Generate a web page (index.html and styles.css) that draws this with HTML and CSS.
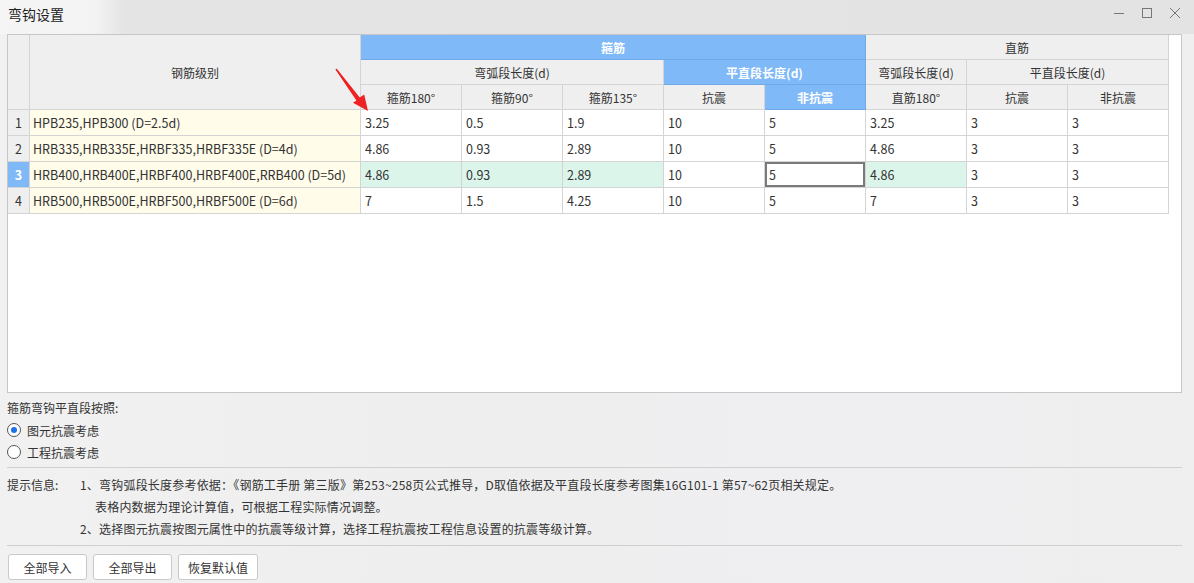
FILE: index.html
```html
<!DOCTYPE html>
<html lang="zh">
<head>
<meta charset="utf-8">
<title>弯钩设置</title>
<link rel="stylesheet" href="styles.css">
</head>
<body>
<div class="window">
  <div class="titlebar">
    <span class="title">弯钩设置</span>
    <div class="controls">
      <svg width="12" height="12" viewBox="0 0 12 12"><path d="M1 6.5H11" stroke="#777" stroke-width="1" fill="none"/></svg>
      <svg width="12" height="12" viewBox="0 0 12 12"><rect x="1.5" y="1.5" width="9" height="9" stroke="#777" stroke-width="1" fill="none"/></svg>
      <svg width="12" height="12" viewBox="0 0 12 12"><path d="M1 1L11 11M11 1L1 11" stroke="#777" stroke-width="1" fill="none"/></svg>
    </div>
  </div>
  <div class="content">
    <div class="grid-frame">
      <table class="grid">
        <colgroup>
          <col class="c-num"><col class="c-name">
          <col class="c-val"><col class="c-val"><col class="c-val"><col class="c-val">
          <col class="c-val"><col class="c-val"><col class="c-val"><col class="c-val">
        </colgroup>
        <thead>
          <tr class="hrow">
            <th rowspan="3" class="rownum"></th>
            <th rowspan="3">钢筋级别</th>
            <th colspan="5" class="blue">箍筋</th>
            <th colspan="3">直筋</th>
          </tr>
          <tr class="hrow">
            <th colspan="3">弯弧段长度(d)</th>
            <th colspan="2" class="blue">平直段长度(d)</th>
            <th>弯弧段长度(d)</th>
            <th colspan="2">平直段长度(d)</th>
          </tr>
          <tr class="hrow">
            <th>箍筋180°</th>
            <th>箍筋90°</th>
            <th>箍筋135°</th>
            <th>抗震</th>
            <th class="blue">非抗震</th>
            <th>直筋180°</th>
            <th>抗震</th>
            <th>非抗震</th>
          </tr>
        </thead>
        <tbody>
          <tr class="drow">
            <td class="rownum">1</td><td class="name">HPB235,HPB300 (D=2.5d)</td>
            <td>3.25</td><td>0.5</td><td>1.9</td><td>10</td><td>5</td><td>3.25</td><td>3</td><td>3</td>
          </tr>
          <tr class="drow">
            <td class="rownum">2</td><td class="name">HRB335,HRB335E,HRBF335,HRBF335E (D=4d)</td>
            <td>4.86</td><td>0.93</td><td>2.89</td><td>10</td><td>5</td><td>4.86</td><td>3</td><td>3</td>
          </tr>
          <tr class="drow sel">
            <td class="rownum cur">3</td><td class="name">HRB400,HRB400E,HRBF400,HRBF400E,RRB400 (D=5d)</td>
            <td class="hl">4.86</td><td class="hl">0.93</td><td class="hl">2.89</td><td>10</td><td class="focus">5<span class="handle"></span></td><td class="hl">4.86</td><td>3</td><td>3</td>
          </tr>
          <tr class="drow">
            <td class="rownum">4</td><td class="name">HRB500,HRB500E,HRBF500,HRBF500E (D=6d)</td>
            <td>7</td><td>1.5</td><td>4.25</td><td>10</td><td>5</td><td>7</td><td>3</td><td>3</td>
          </tr>
        </tbody>
      </table>
      <svg class="arrow" width="40" height="50" viewBox="0 0 40 50">
        <polygon points="4.4,6.4 5.6,5.6 28.8,34.6 33.2,31.4 37,48 22,39.8 25.4,37.4" fill="#ee2222"/>
      </svg>
    </div>

    <div class="options">
      <div class="opt-label">箍筋弯钩平直段按照:</div>
      <label class="radio"><span class="dot on"></span>图元抗震考虑</label>
      <label class="radio"><span class="dot"></span>工程抗震考虑</label>
    </div>

    <div class="info">
      <div class="info-label">提示信息:</div>
      <div class="info-text">
        <div>1、弯钩弧段长度参考依据：《钢筋工手册 第三版》第253~258页公式推导，D取值依据及平直段长度参考图集16G101-1 第57~62页相关规定。</div>
        <div class="indent">表格内数据为理论计算值，可根据工程实际情况调整。</div>
        <div>2、选择图元抗震按图元属性中的抗震等级计算，选择工程抗震按工程信息设置的抗震等级计算。</div>
      </div>
    </div>

    <div class="buttons">
      <button class="btn">全部导入</button>
      <button class="btn">全部导出</button>
      <button class="btn">恢复默认值</button>
    </div>
  </div>
</div>
</body>
</html>
```

FILE: styles.css
```css
* { box-sizing: border-box; }
html, body { margin: 0; padding: 0; }
body {
  width: 1194px;
  height: 583px;
  overflow: hidden;
  font-family: "Noto Sans CJK SC", "Noto Sans", sans-serif;
  font-size: 12px;
  color: #333;
  background: linear-gradient(90deg, #f1f1f1 0, #eeeeee 40%, #efeef1 70%, #efefef 100%);
}
.window { width: 1194px; height: 583px; }
.titlebar {
  height: 34px;
  display: flex;
  align-items: flex-start;
  justify-content: space-between;
  background: linear-gradient(90deg, #f5f5f5 0, #f3f3f3 95px, #e4e4e4 125px, #e3e3e3 100%);
}
.title {
  font-size: 14px;
  color: #222;
  padding-left: 8px;
  line-height: 28px;
}
.controls {
  display: flex;
  gap: 16px;
  padding: 7px 13px 0 0;
}
.content { padding: 0 12px 0 7px; }

.grid-frame {
  position: relative;
  height: 359px;
  border: 1px solid #c6c6c6;
  background: #fff;
}
.grid {
  table-layout: fixed;
  border-collapse: separate;
  border-spacing: 0;
  width: 1161px;
}
.c-num { width: 22px; }
.c-name { width: 331px; }
.c-val { width: 101px; }
.grid th, .grid td {
  border-right: 1px solid #d4d4d4;
  border-bottom: 1px solid #d4d4d4;
  padding: 0 4px;
  white-space: nowrap;
  overflow: hidden;
}
.grid th {
  background: #efefef;
  font-weight: normal;
  color: #333;
  text-align: center;
  font-size: 12px;
}
.grid th.blue {
  background: #7fb9f7;
  color: #fff;
  font-weight: bold;
  border-right-color: #6fa9e8;
  border-bottom-color: #6fa9e8;
}
.hrow { height: 25px; }
.drow { height: 26px; }
.grid td { text-align: left; background: #fff; font-size: 12.5px; }
.grid td.rownum { background: #efefef; text-align: center; padding: 0; }
.grid td.rownum.cur { background: #7fb9f7; color: #fff; font-weight: bold; }
.grid td.name { background: #fffcea; padding-left: 3px; }
.grid td.hl { background: #dcf5eb; }
.grid td.focus {
  position: relative;
  box-shadow: inset 0 0 0 2px #7a7a7a;
}
.handle {
  position: absolute;
  right: -3px;
  bottom: -3px;
  width: 5px;
  height: 5px;
  background: #7a7a7a;
}
.arrow {
  position: absolute;
  left: 323px;
  top: 28px;
}

.options { padding-top: 4px; }
.opt-label { line-height: 22px; }
.radio {
  display: flex;
  align-items: center;
  height: 22px;
  gap: 6px;
}
.dot {
  width: 14px;
  height: 14px;
  border: 1px solid #555;
  border-radius: 50%;
  background: #fff;
  position: relative;
}
.dot.on::after {
  content: "";
  position: absolute;
  left: 3px;
  top: 3px;
  width: 6px;
  height: 6px;
  border-radius: 50%;
  background: #1a73e8;
}

.info {
  margin-top: 4px;
  border-top: 1px solid #cfcfcf;
  padding-top: 6px;
  display: flex;
  font-size: 12px;
}
.info-label { width: 73px; line-height: 22px; }
.info-text > div { line-height: 22px; letter-spacing: 0.2px; }
.info-text .indent { padding-left: 15px; }
.info { padding-bottom: 5px; border-bottom: 1px solid #cfcfcf; }

.buttons {
  display: flex;
  gap: 6px;
  padding-top: 8px;
  padding-left: 1px;
}
.btn {
  width: 79px;
  height: 26px;
  background: #fff;
  border: 1px solid #cacaca;
  border-radius: 3px;
  font-family: inherit;
  font-size: 12px;
  color: #333;
  padding: 0;
}
.btn:last-child { width: 80px; }
```
